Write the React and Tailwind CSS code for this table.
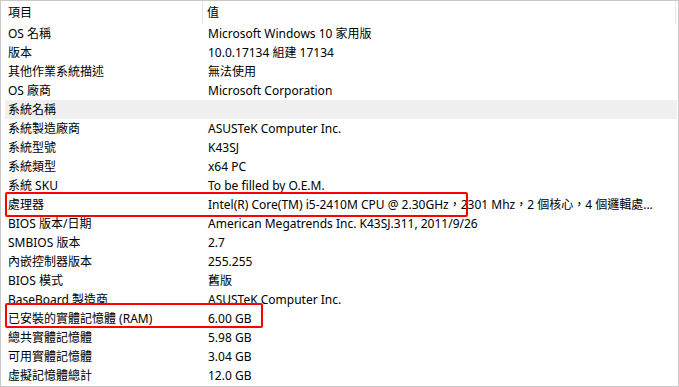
const rows = [
  ["OS 名稱", "Microsoft Windows 10 家用版"],
  ["版本", "10.0.17134 組建 17134"],
  ["其他作業系統描述", "無法使用"],
  ["OS 廠商", "Microsoft Corporation"],
  ["系統名稱", "", true],
  ["系統製造廠商", "ASUSTeK Computer Inc."],
  ["系統型號", "K43SJ"],
  ["系統類型", "x64 PC"],
  ["系統 SKU", "To be filled by O.E.M."],
  ["處理器", "Intel(R) Core(TM) i5-2410M CPU @ 2.30GHz，2301 Mhz，2 個核心，4 個邏輯處..."],
  ["BIOS 版本/日期", "American Megatrends Inc. K43SJ.311, 2011/9/26"],
  ["SMBIOS 版本", "2.7"],
  ["內嵌控制器版本", "255.255"],
  ["BIOS 模式", "舊版"],
  ["BaseBoard 製造商", "ASUSTeK Computer Inc."],
  ["已安裝的實體記憶體 (RAM)", "6.00 GB"],
  ["總共實體記憶體", "5.98 GB"],
  ["可用實體記憶體", "3.04 GB"],
  ["虛擬記憶體總計", "12.0 GB"],
];

export default function App() {
  return (
    <div
      className="relative w-[679px] h-[387px] bg-white border border-[#c9c9c9] text-[12px] text-black overflow-hidden"
      style={{ fontFamily: '"Noto Sans", "Noto Sans CJK TC", sans-serif' }}
    >
      {/* header */}
      <div className="flex h-[23px] items-center ml-[4px] mr-[2px]">
        <div className="w-[197px] pl-[3px] leading-[23px]">項目</div>
        <div className="w-px h-[23px] bg-[#e5e5e5]" />
        <div className="flex-1 pl-[4px] leading-[23px]">值</div>
        <div className="w-px h-[23px] bg-[#e5e5e5]" />
      </div>

      {rows.map(([k, v, hl]) => (
        <div
          key={k}
          className={`flex h-[19px] items-center ml-[4px] mr-[1px] ${hl ? "bg-[#f0f0f0]" : ""}`}
        >
          <div className="w-[200px] pl-[3px] leading-[19px] whitespace-nowrap">{k}</div>
          <div className="flex-1 pl-[3px] leading-[19px] whitespace-nowrap">{v}</div>
        </div>
      ))}

      {/* annotations */}
      <div className="absolute left-[4px] top-[191px] w-[463px] h-[25px] border-2 border-[#ff0000] rounded-[2px]" />
      <div className="absolute left-[4px] top-[302px] w-[258px] h-[25px] border-2 border-[#ff0000] rounded-[2px]" />
    </div>
  );
}
